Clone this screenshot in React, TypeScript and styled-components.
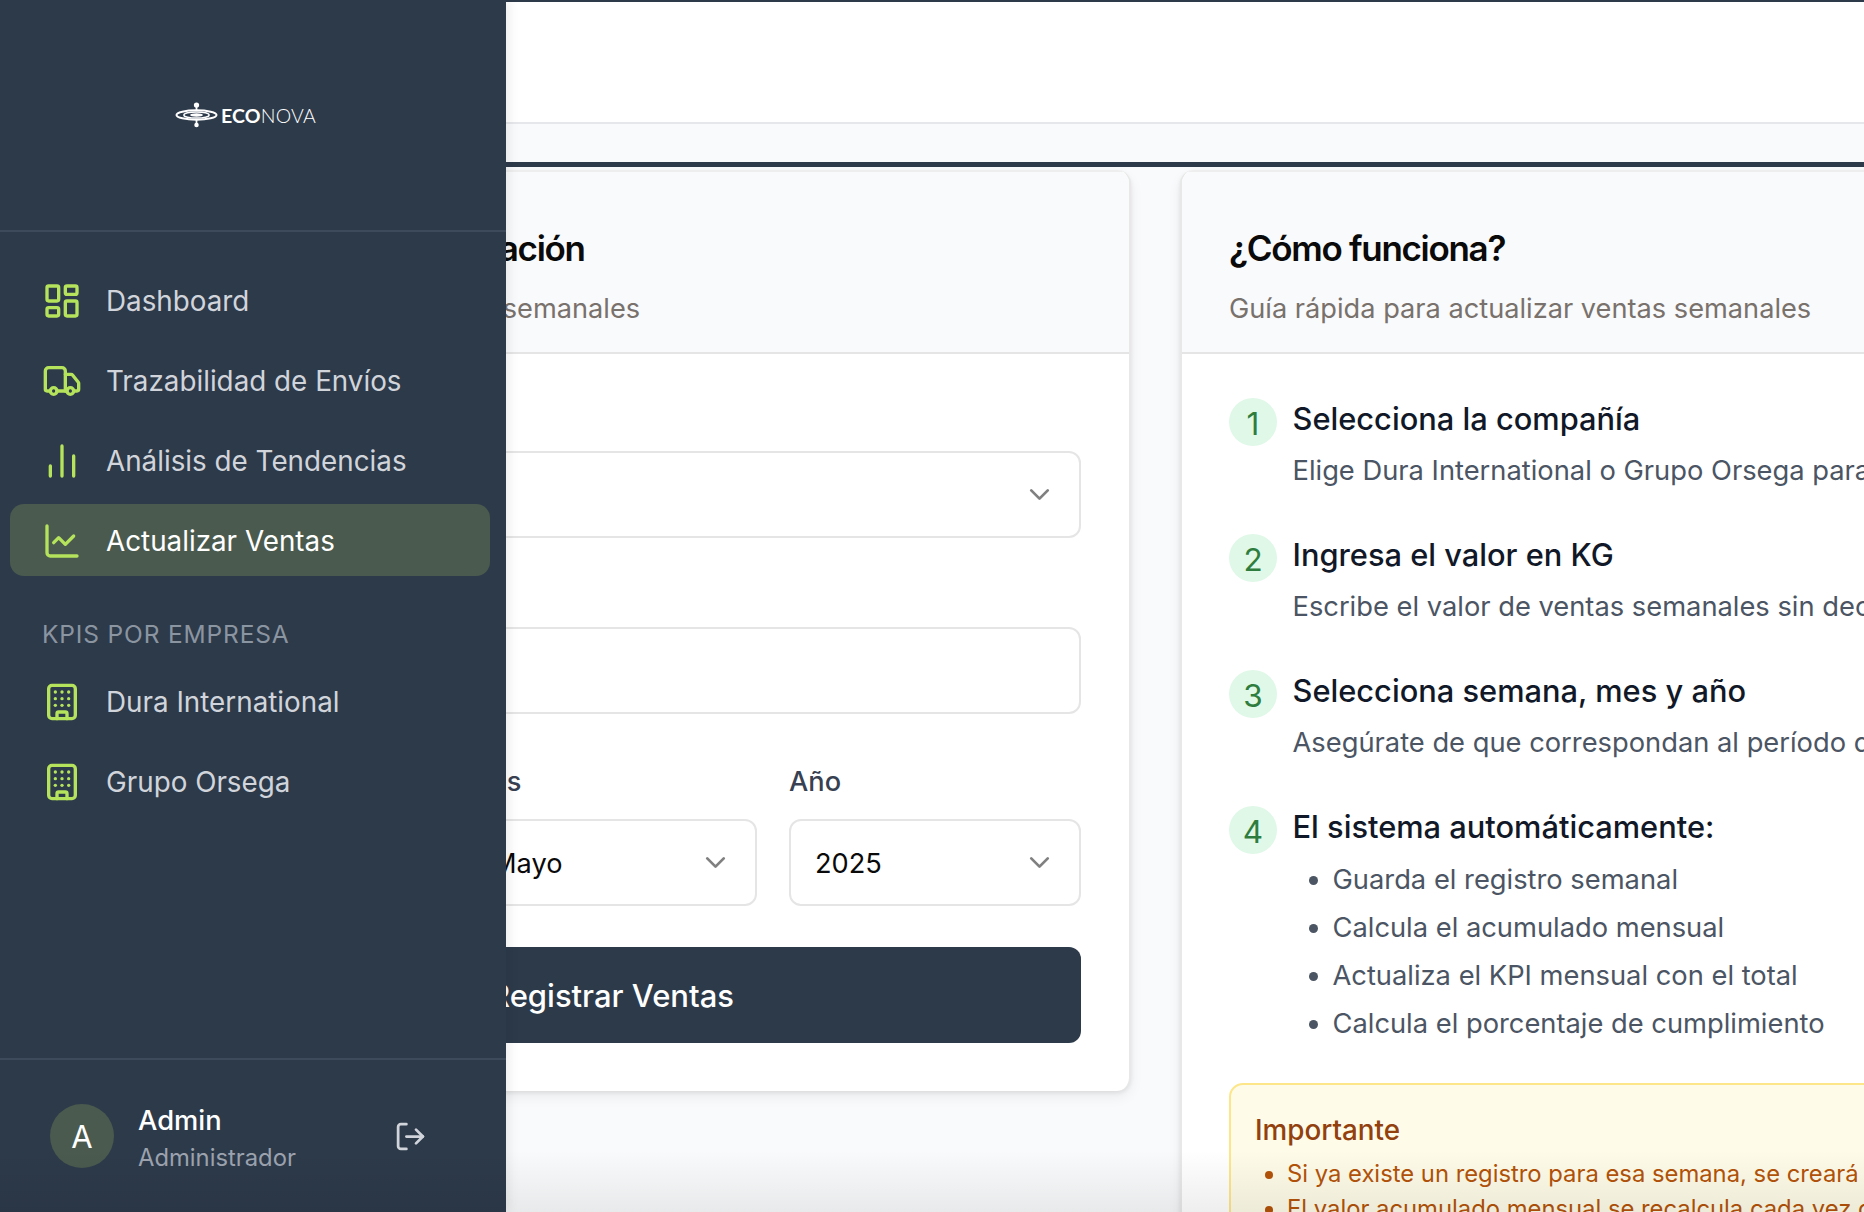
import React from "react";
import styled, { createGlobalStyle } from "styled-components";
import { LayoutDashboard, Truck, ChartNoAxesColumn, ChartLine, Building, LogOut, ChevronDown } from "lucide-react";

const Global = createGlobalStyle`
  html, body { margin: 0; padding: 0; background: #f9fafb; }
  body { font-family: Inter, "Liberation Sans", sans-serif; }
  * { box-sizing: border-box; }
`;

const navy = "#2d3a4a";

const Page = styled.div`
  position: relative;
  width: 1864px;
  height: 1212px;
  overflow: hidden;
  background: #f9fafb;
`;

const Sidebar = styled.aside`
  position: absolute;
  z-index: 2;
  top: 0;
  left: 0;
  bottom: 0;
  width: 506px;
  display: flex;
  flex-direction: column;
  background: ${navy};
  box-shadow: 3px 0 10px rgba(0, 0, 0, 0.08);
`;

const Brand = styled.div`
  height: 232px;
  flex: none;
  border-bottom: 2px solid #3d4a5b;
  display: flex;
  align-items: center;
  justify-content: center;
  gap: 3px;
  padding-right: 15px;
`;

const BrandText = styled.span`
  font-family: Lato, sans-serif;
  font-size: 19.5px;
  color: #fff;
  font-weight: 300;
  letter-spacing: 0.2px;
  b { font-weight: 700; }
`;

const Nav = styled.nav`
  display: flex;
  flex-direction: column;
  gap: 8px;
  padding: 32px 16px 0 10px;
`;

const NavItem = styled.div<{ $active?: boolean }>`
  height: 72px;
  display: flex;
  align-items: center;
  gap: 24px;
  padding: 1px 0 0 32px;
  border-radius: 14px;
  font-size: 27.8px;
  color: ${(p) => (p.$active ? "#ffffff" : "#d1d5db")};
  background: ${(p) => (p.$active ? "#4a5a4e" : "transparent")};
  svg { flex: none; color: #b5e35c; }
`;

const SectionLabel = styled.div`
  padding: 32px 0 5px 32px;
  font-size: 24.5px;
  line-height: 36px;
  letter-spacing: 0.85px;
  text-transform: uppercase;
  color: #8b95a1;
`;

const SideFooter = styled.div`
  margin-top: auto;
  height: 154px;
  flex: none;
  border-top: 2px solid #3d4a5b;
  padding: 44px 0 0 50px;
  display: flex;
  align-items: flex-start;
`;

const Avatar = styled.div`
  width: 64px;
  height: 64px;
  flex: none;
  border-radius: 50%;
  background: #4a5a4e;
  color: #fff;
  font-size: 31px;
  display: flex;
  align-items: center;
  justify-content: center;
`;

const UserInfo = styled.div`
  margin-left: 24px;
  width: 258px;
  margin-top: -3px;
`;

const UserName = styled.div`
  font-size: 27.3px;
  line-height: 40px;
  font-weight: 500;
  color: #fff;
`;

const UserRole = styled.div`
  font-size: 23.8px;
  line-height: 34px;
  color: #9ca3af;
`;

const LogoutIcon = styled(LogOut)`
  color: #d1d5db;
  margin-top: 16px;
  margin-left: -2px;
  flex: none;
`;

const Main = styled.main`
  display: flex;
  flex-direction: column;
  height: 100%;
`;

const TopBar = styled.header`
  height: 124px;
  flex: none;
  background: #fff;
  border-top: 2px solid ${navy};
  border-bottom: 2px solid #e5e7eb;
`;

const Band = styled.div`
  height: 38px;
  flex: none;
`;

const Rule = styled.div`
  height: 4.5px;
  flex: none;
  background: ${navy};
`;

const Content = styled.div`
  display: grid;
  grid-template-columns: 1036px 1036px;
  column-gap: 49px;
  align-items: start;
  padding: 3.5px 0 0 95px;
`;

const Card = styled.section`
  background: #fff;
  border-radius: 14px;
  border: 2px solid #e8e8e8;
  border-width: 0 2px 0 2px;
  box-shadow: 0 2px 4px rgba(0, 0, 0, 0.08), 0 6px 14px rgba(0, 0, 0, 0.06);
  overflow: hidden;
`;

const CardHead = styled.div<{ $inset: number }>`
  background: #f9fafb;
  height: 184px;
  padding: 46px 48px 0 ${(p) => p.$inset}px;
  border-top: 2px solid #eeeeee;
  border-bottom: 2px solid #e5e5e5;
`;

const CardTitle = styled.h2<{ $wordGap?: number }>`
  margin: 0;
  font-size: 35px;
  line-height: 60px;
  font-weight: 600;
  letter-spacing: -1.3px;
  word-spacing: ${(p) => p.$wordGap ?? 0}px;
  color: #0a0a0a;
`;

const CardSub = styled.p`
  margin: 10px 0 0;
  font-size: 27.2px;
  line-height: 42px;
  color: #78716c;
`;

const FormBody = styled.div`
  padding: 38px 48px 48px 46px;
  display: flex;
  flex-direction: column;
`;

const Field = styled.div<{ $top?: number }>`
  margin-top: ${(p) => p.$top ?? 0}px;
  min-width: 0;
`;

const Label = styled.label`
  display: block;
  padding-top: 1px;
  margin-bottom: 16px;
  font-size: 27.2px;
  line-height: 42px;
  font-weight: 500;
  color: #374151;
`;

const Control = styled.div`
  height: 87px;
  border: 2px solid #e5e5e5;
  border-radius: 12px;
  background: #fff;
  padding: 1px 26px 0 24px;
  display: flex;
  align-items: center;
  justify-content: space-between;
  font-size: 27.2px;
  color: #0a0a0a;
  svg { color: #808080; flex: none; margin: -1px -3px 0 0; }
`;

const Triple = styled.div`
  display: grid;
  grid-template-columns: 291px 291px 292px;
  column-gap: 32px;
  margin-top: 46px;
`;

const Submit = styled.button`
  margin-top: 41px;
  height: 96px;
  border: 0;
  border-radius: 12px;
  background: ${navy};
  color: #fff;
  font-family: inherit;
  font-size: 31px;
  font-weight: 500;
`;

const GuideBody = styled.div`
  padding: 44px 48px 48px 47px;
  display: flex;
  flex-direction: column;
  gap: 42px;
`;

const Step = styled.div`
  display: flex;
  gap: 15.5px;
`;

const StepNum = styled.div`
  width: 48px;
  height: 48px;
  flex: none;
  border-radius: 50%;
  background: #dff8e7;
  color: #2e7d3e;
  font-size: 31.5px;
  display: flex;
  align-items: center;
  justify-content: center;
  padding-top: 3px;
`;

const StepTitle = styled.div`
  font-size: 30.8px;
  line-height: 42px;
  font-weight: 500;
  color: #111827;
`;

const StepDesc = styled.div`
  margin-top: 9px;
  font-size: 27.3px;
  line-height: 43px;
  color: #4b5563;
  white-space: nowrap;
`;

const Bullets = styled.ul`
  margin: 12px 0 0;
  padding: 0 0 0 40px;
  font-size: 27.3px;
  line-height: 40px;
  color: #4b5563;
  li + li { margin-top: 8px; }
`;

const Notice = styled.div`
  margin-top: -3px;
  border: 2px solid #fde68a;
  border-radius: 14px;
  background: #fefce8;
  padding: 25px 24px;
`;

const NoticeTitle = styled.div`
  font-size: 27.8px;
  line-height: 40px;
  font-weight: 500;
  color: #92400e;
`;

const NoticeList = styled.ul`
  margin: 6px 0 0;
  padding: 0 0 0 32px;
  font-size: 23.8px;
  line-height: 35px;
  color: #b45309;
  white-space: nowrap;
`;

const BottomFade = styled.div`
  position: absolute;
  z-index: 3;
  left: 0;
  right: 0;
  bottom: 0;
  height: 62px;
  pointer-events: none;
  background: linear-gradient(to bottom, rgba(0, 0, 0, 0), rgba(0, 0, 0, 0.065));
`;

const LogoMark = () => (
  <svg width="43" height="26" viewBox="0 0 44 26" fill="none">
    <ellipse cx="22" cy="13" rx="20.5" ry="4.8" stroke="#fff" strokeWidth="2" />
    <ellipse cx="22" cy="13" rx="13" ry="3.1" stroke="#fff" strokeWidth="1.6" />
    <ellipse cx="22" cy="13" rx="6.5" ry="1.7" fill="#fff" />
    <path d="M22 4v5M22 17v6" stroke="#fff" strokeWidth="1.8" />
    <circle cx="22" cy="2.8" r="2.7" fill="#fff" />
    <circle cx="22" cy="23.2" r="2.3" fill="#fff" />
  </svg>
);

const steps = [
  ["Selecciona la compañía", "Elige Dura International o Grupo Orsega para registrar sus ventas"],
  ["Ingresa el valor en KG", "Escribe el valor de ventas semanales sin decimales ni separadores"],
  ["Selecciona semana, mes y año", "Asegúrate de que correspondan al período de las ventas registradas"],
];

const autos = [
  "Guarda el registro semanal",
  "Calcula el acumulado mensual",
  "Actualiza el KPI mensual con el total",
  "Calcula el porcentaje de cumplimiento",
];

export default function App() {
  return (
    <Page>
      <Global />
      <Main>
        <TopBar />
        <Band />
        <Rule />
        <Content>
          <Card>
            <CardHead $inset={46}>
              <CardTitle $wordGap={2.5}>Formulario de Actualización</CardTitle>
              <CardSub>Ingresa los datos de ventas semanales</CardSub>
            </CardHead>
            <FormBody>
              <Field>
                <Label>Compañía</Label>
                <Control>
                  Dura International
                  <ChevronDown size={33} />
                </Control>
              </Field>
              <Field $top={30}>
                <Label>Valor (KG)</Label>
                <Control />
              </Field>
              <Triple>
                <Field>
                  <Label>Semana</Label>
                  <Control>
                    Semana 1
                    <ChevronDown size={33} />
                  </Control>
                </Field>
                <Field>
                  <Label>Mes</Label>
                  <Control>
                    Mayo
                    <ChevronDown size={33} />
                  </Control>
                </Field>
                <Field>
                  <Label>Año</Label>
                  <Control>
                    2025
                    <ChevronDown size={33} />
                  </Control>
                </Field>
              </Triple>
              <Submit>Registrar Ventas</Submit>
            </FormBody>
          </Card>
          <Card>
            <CardHead $inset={47}>
              <CardTitle>¿Cómo funciona?</CardTitle>
              <CardSub>Guía rápida para actualizar ventas semanales</CardSub>
            </CardHead>
            <GuideBody>
              {steps.map(([title, desc], i) => (
                <Step key={title}>
                  <StepNum>{i + 1}</StepNum>
                  <div>
                    <StepTitle>{title}</StepTitle>
                    <StepDesc>{desc}</StepDesc>
                  </div>
                </Step>
              ))}
              <Step>
                <StepNum>4</StepNum>
                <div>
                  <StepTitle>El sistema automáticamente:</StepTitle>
                  <Bullets>
                    {autos.map((a) => (
                      <li key={a}>{a}</li>
                    ))}
                  </Bullets>
                </div>
              </Step>
              <Notice>
                <NoticeTitle>Importante</NoticeTitle>
                <NoticeList>
                  <li>Si ya existe un registro para esa semana, se creará un duplicado</li>
                  <li>El valor acumulado mensual se recalcula cada vez que registras</li>
                </NoticeList>
              </Notice>
            </GuideBody>
          </Card>
        </Content>
      </Main>
      <Sidebar>
        <Brand>
          <LogoMark />
          <BrandText>
            <b>ECO</b>NOVA
          </BrandText>
        </Brand>
        <Nav>
          <NavItem>
            <LayoutDashboard size={40} strokeWidth={2} />
            Dashboard
          </NavItem>
          <NavItem>
            <Truck size={40} strokeWidth={2} />
            Trazabilidad de Envíos
          </NavItem>
          <NavItem>
            <ChartNoAxesColumn size={40} strokeWidth={2} />
            Análisis de Tendencias
          </NavItem>
          <NavItem $active>
            <ChartLine size={40} strokeWidth={2} />
            Actualizar Ventas
          </NavItem>
          <SectionLabel>KPIs por Empresa</SectionLabel>
          <NavItem>
            <Building size={40} strokeWidth={2} />
            Dura International
          </NavItem>
          <NavItem>
            <Building size={40} strokeWidth={2} />
            Grupo Orsega
          </NavItem>
        </Nav>
        <SideFooter>
          <Avatar>A</Avatar>
          <UserInfo>
            <UserName>Admin</UserName>
            <UserRole>Administrador</UserRole>
          </UserInfo>
          <LogoutIcon size={33} strokeWidth={2} />
        </SideFooter>
      </Sidebar>
      <BottomFade />
    </Page>
  );
}
